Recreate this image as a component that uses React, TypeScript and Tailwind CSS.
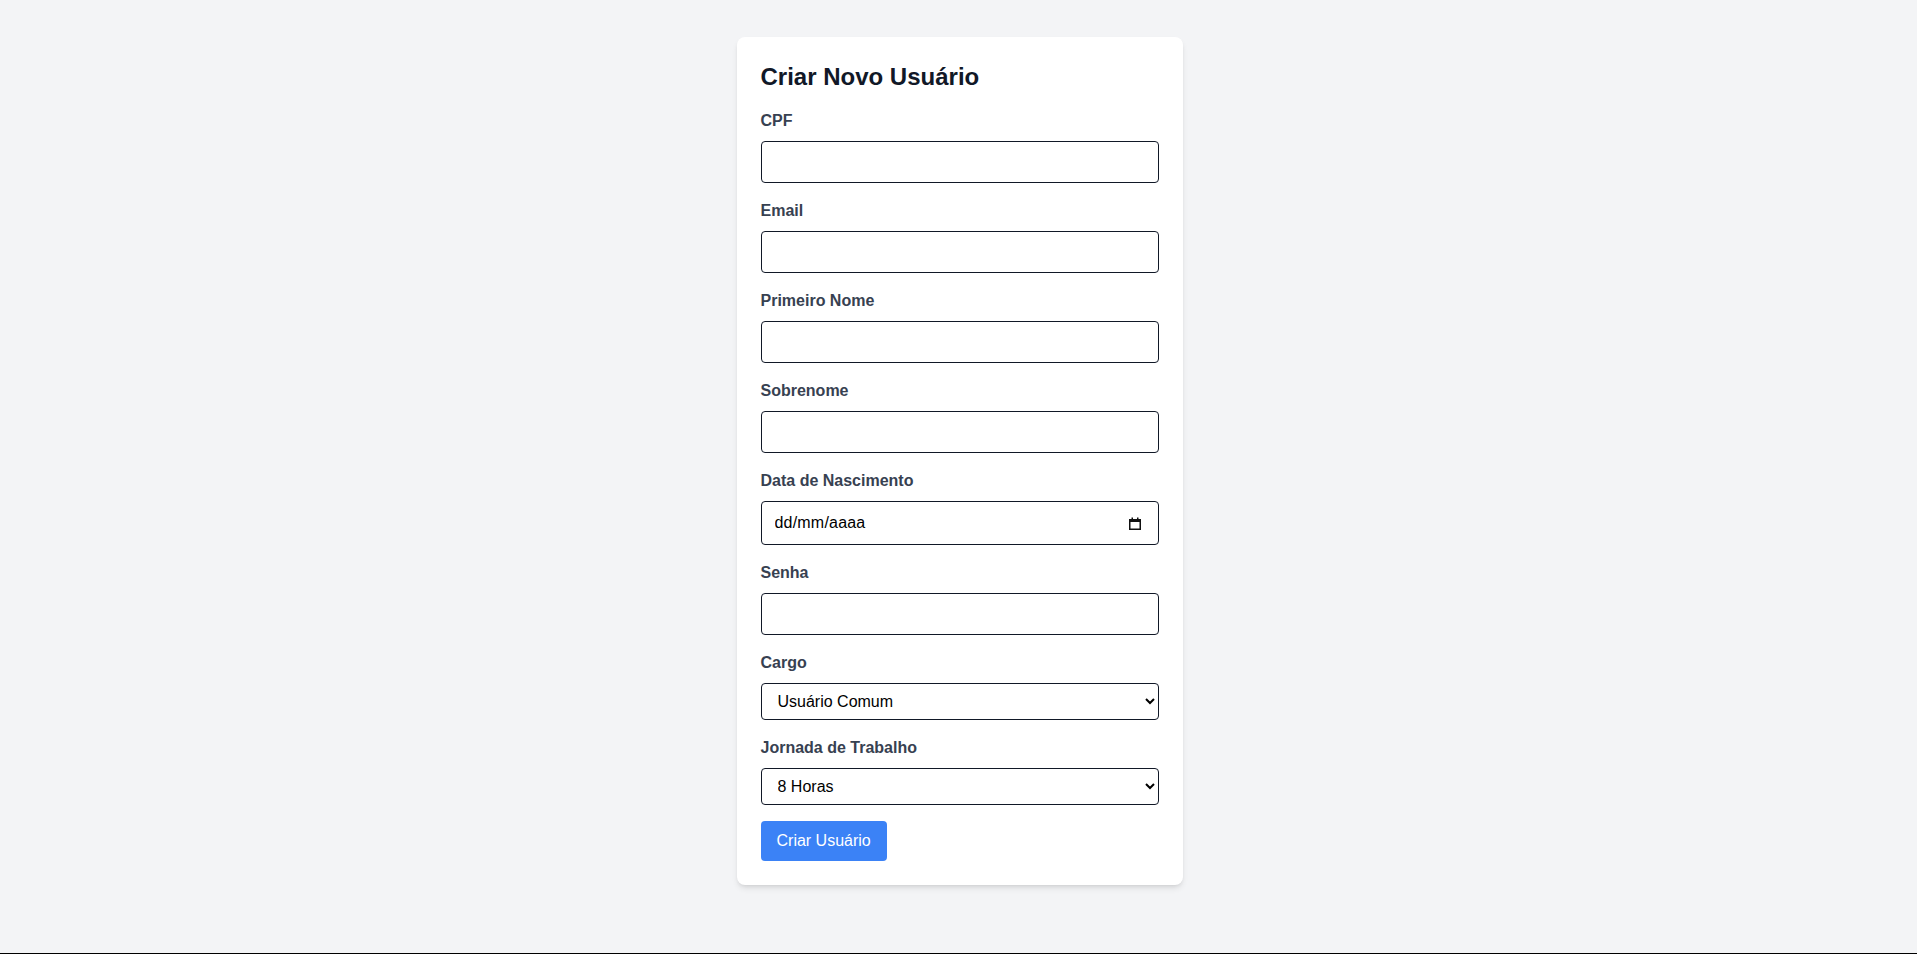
import React from "react";

const labelCls = "block text-base font-bold text-[#374151] mb-2";
const inputCls = "block w-full px-3 py-2 border border-[#111827] rounded text-base text-black bg-white";

function Field({ label, children }: { label: string; children: React.ReactNode }) {
  return (
    <div className="mb-4">
      <label className={labelCls}>{label}</label>
      {children}
    </div>
  );
}

function CalendarIcon() {
  return (
    <svg width="12" height="13" viewBox="0 0 12 13" className="absolute right-[18px] top-[16px] pointer-events-none">
      <rect x="0.75" y="2.75" width="10.5" height="9.5" fill="none" stroke="#111" strokeWidth="1.5" />
      <rect x="0" y="2" width="12" height="3" fill="#111" />
      <rect x="2.5" y="0.5" width="1.5" height="2" fill="#111" />
      <rect x="8" y="0.5" width="1.5" height="2" fill="#111" />
    </svg>
  );
}

export default function App() {
  return (
    <div
      className="min-h-screen bg-[#f3f4f6] border-b border-black pt-[37px]"
      style={{ fontFamily: '"Liberation Sans", Arial, sans-serif' }}
    >
      <div className="w-[446px] mx-auto translate-x-[1px] bg-white rounded-lg shadow-md p-6">
        <h1 className="text-2xl font-bold text-[#111827] mb-4">Criar Novo Usuário</h1>
        <form onSubmit={(e) => e.preventDefault()}>
          <Field label="CPF">
            <input type="text" className={inputCls} />
          </Field>
          <Field label="Email">
            <input type="email" className={inputCls} />
          </Field>
          <Field label="Primeiro Nome">
            <input type="text" className={inputCls} />
          </Field>
          <Field label="Sobrenome">
            <input type="text" className={inputCls} />
          </Field>
          <Field label="Data de Nascimento">
            <div className="relative">
              <input
                type="text"
                placeholder="dd/mm/aaaa"
                className="block w-full h-[44px] pl-[13px] pr-10 border border-[#111827] rounded text-base text-black bg-white placeholder:text-black tracking-[0.2px]"
              />
              <CalendarIcon />
            </div>
          </Field>
          <Field label="Senha">
            <input type="password" className={inputCls} />
          </Field>
          <Field label="Cargo">
            <select className={inputCls} defaultValue="comum">
              <option value="comum">Usuário Comum</option>
              <option value="admin">Administrador</option>
            </select>
          </Field>
          <Field label="Jornada de Trabalho">
            <select className={inputCls} defaultValue="8">
              <option value="6">6 Horas</option>
              <option value="8">8 Horas</option>
            </select>
          </Field>
          <button type="submit" className="bg-[#3b82f6] text-white px-4 py-2 rounded text-base">
            Criar Usuário
          </button>
        </form>
      </div>
    </div>
  );
}
